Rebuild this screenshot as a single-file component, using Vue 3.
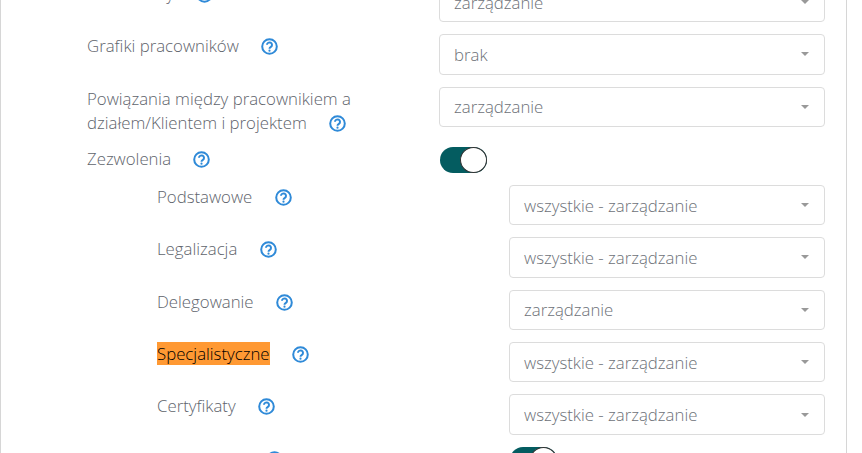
<script setup>
const topRows = [
  { label: 'Dokumenty', value: 'zarządzanie' },
  { label: 'Grafiki pracowników', value: 'brak' },
  { label: 'Powiązania między pracownikiem a działem/Klientem i projektem', value: 'zarządzanie', cls: 'tall' },
];

const permissions = [
  { label: 'Podstawowe', value: 'wszystkie - zarządzanie' },
  { label: 'Legalizacja', value: 'wszystkie - zarządzanie' },
  { label: 'Delegowanie', value: 'zarządzanie' },
  { label: 'Specjalistyczne', value: 'wszystkie - zarządzanie', marked: true },
  { label: 'Certyfikaty', value: 'wszystkie - zarządzanie' },
];
</script>

<template>
  <div class="viewport">
    <div class="card">
      <div v-for="row in topRows" :key="row.label" class="row" :class="row.cls">
        <div class="label">
          {{ row.label }}
          <svg class="help" viewBox="0 0 17 17">
            <circle cx="8.5" cy="8.5" r="7.3" />
            <path d="M6 6.8a2.5 2.4 0 1 1 3.9 2c-.9.6-1.4 1-1.4 1.9" />
            <circle class="dot" cx="8.5" cy="12.7" r="1.1" />
          </svg>
        </div>
        <div class="select">
          <span>{{ row.value }}</span>
          <i class="caret"></i>
        </div>
      </div>

      <div class="row toggle-row">
        <div class="label">
          Zezwolenia
          <svg class="help" viewBox="0 0 17 17">
            <circle cx="8.5" cy="8.5" r="7.3" />
            <path d="M6 6.8a2.5 2.4 0 1 1 3.9 2c-.9.6-1.4 1-1.4 1.9" />
            <circle class="dot" cx="8.5" cy="12.7" r="1.1" />
          </svg>
        </div>
        <div class="toggle"><i></i></div>
      </div>

      <div v-for="row in permissions" :key="row.label" class="row sub">
        <div class="label">
          <span :class="{ marked: row.marked }">{{ row.label }}</span>
          <svg class="help spaced" viewBox="0 0 17 17">
            <circle cx="8.5" cy="8.5" r="7.3" />
            <path d="M6 6.8a2.5 2.4 0 1 1 3.9 2c-.9.6-1.4 1-1.4 1.9" />
            <circle class="dot" cx="8.5" cy="12.7" r="1.1" />
          </svg>
        </div>
        <div class="select">
          <span>{{ row.value }}</span>
          <i class="caret"></i>
        </div>
      </div>

      <div class="row sub toggle-row">
        <div class="label">
          Dokumenty
          <svg class="help" viewBox="0 0 17 17">
            <circle cx="8.5" cy="8.5" r="7.3" />
            <path d="M6 6.8a2.5 2.4 0 1 1 3.9 2c-.9.6-1.4 1-1.4 1.9" />
            <circle class="dot" cx="8.5" cy="12.7" r="1.1" />
          </svg>
        </div>
        <div class="toggle"><i></i></div>
      </div>
    </div>
  </div>
</template>

<style scoped>
.viewport {
  height: 453px;
  overflow: hidden;
  background: #fff;
  font-family: "Open Sans", sans-serif;
  font-size: 16.8px;
  font-weight: 300;
  color: #60646c;
}
.card {
  box-sizing: border-box;
  width: 847px;
  margin-top: -18.2px;
  padding: 0 21px 0 86px;
  border-left: 1px solid #d6d6d6;
  border-right: 1px solid #d6d6d6;
}
.row {
  display: grid;
  grid-template-columns: 352px 386px;
  margin-bottom: 12px;
}
.row.tall {
  margin-bottom: 12.3px;
}
.row.sub {
  grid-template-columns: 352px 316px;
  padding-left: 70px;
}
.label {
  width: 280px;
  line-height: 24px;
}
.help {
  width: 17px;
  height: 17px;
  margin-left: 17.6px;
  vertical-align: -3px;
  fill: none;
  stroke: #2f8ad8;
  stroke-width: 2;
}
.help.spaced {
  margin-left: 22.6px;
}
.help .dot {
  fill: #2f8ad8;
  stroke: none;
}
.select {
  box-sizing: border-box;
  height: 40.4px;
  display: flex;
  align-items: center;
  justify-content: space-between;
  padding: 0 15px 0 14px;
  border: 1px solid #dcdcdc;
  border-radius: 4px;
  color: #6d7178;
}
.caret {
  width: 0;
  height: 0;
  border-left: 4px solid transparent;
  border-right: 4px solid transparent;
  border-top: 4px solid #999;
}
.marked {
  background: #ff9933;
  color: #000;
}
.toggle {
  position: relative;
  width: 47px;
  height: 26px;
  margin-left: 1px;
  border-radius: 13px;
  background: #045c60;
}
.toggle i {
  position: absolute;
  right: 0;
  top: 0;
  box-sizing: border-box;
  width: 27px;
  height: 26px;
  border: 1px solid #333;
  border-radius: 50%;
  background: #fff;
}
</style>
